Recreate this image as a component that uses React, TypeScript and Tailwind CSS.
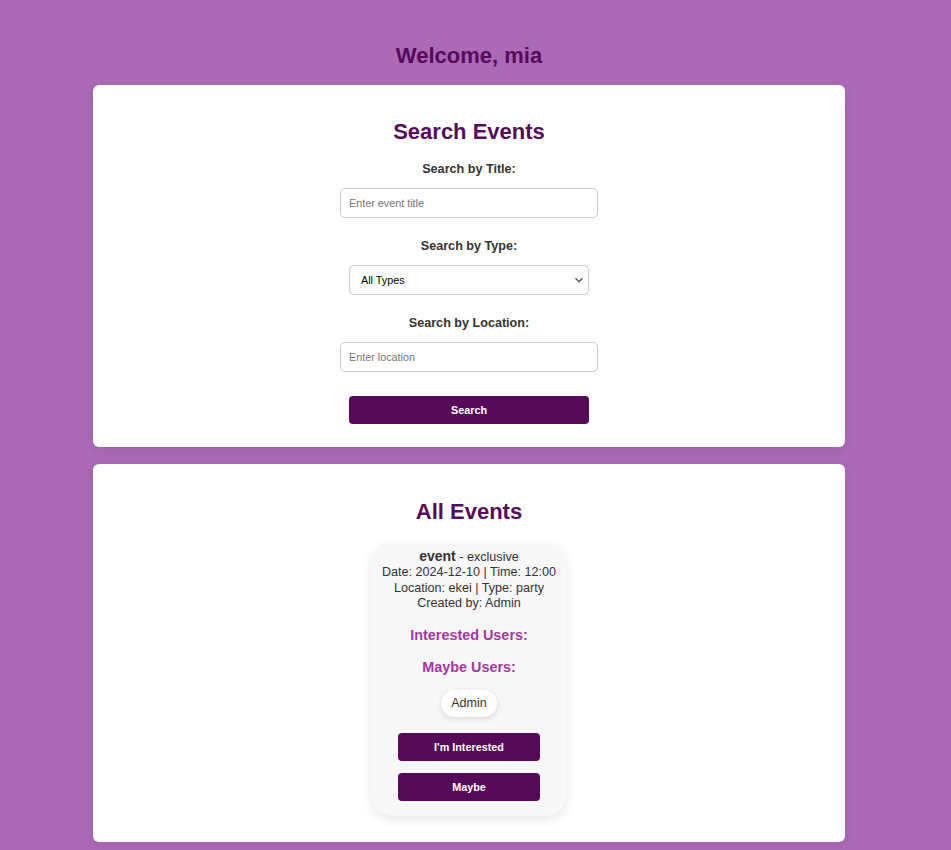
const font = { fontFamily: '"Liberation Sans", Arial, sans-serif' };

const Label = ({ children }: { children: React.ReactNode }) => {
  return <p className="text-[12.6px] leading-[16px] font-bold text-[#333333]">{children}</p>;
};

const SearchCard = () => {
  return (
    <section className="w-[752px] bg-white rounded-[6px] shadow-[0_2px_10px_rgba(0,0,0,0.08)] flex flex-col items-center pt-[33px] pb-[23px]">
      <h2 className="text-[22px] leading-[28px] font-bold text-[#560a5b]">Search Events</h2>
      <div className="mt-[15px]">
        <Label>Search by Title:</Label>
      </div>
      <input
        className="mt-[11px] w-[258px] h-[30px] border border-[#cccccc] rounded-[5px] px-[8px] text-[10.8px] text-black placeholder:text-[#757575] outline-none"
        placeholder="Enter event title"
      />
      <div className="mt-[20px]">
        <Label>Search by Type:</Label>
      </div>
      <div className="mt-[11px] relative w-[240px] h-[30px]">
        <select className="w-full h-full border border-[#cccccc] rounded-[5px] pl-[11px] pr-[24px] text-[10.8px] text-black bg-white appearance-none outline-none">
          <option>All Types</option>
        </select>
        <svg className="absolute right-[5px] top-[10px] pointer-events-none" width="10" height="10" viewBox="0 0 10 10">
          <path d="M1.5 3.2 L5 6.7 L8.5 3.2" fill="none" stroke="#555" strokeWidth="1.4" />
        </svg>
      </div>
      <div className="mt-[20px]">
        <Label>Search by Location:</Label>
      </div>
      <input
        className="mt-[11px] w-[258px] h-[30px] border border-[#cccccc] rounded-[5px] px-[8px] text-[10.8px] text-black placeholder:text-[#757575] outline-none"
        placeholder="Enter location"
      />
      <button className="mt-[24px] w-[240px] h-[28px] bg-[#560a58] rounded-[4px] text-white text-[10.8px] font-bold">
        Search
      </button>
    </section>
  );
};

const EventCard = () => {
  return (
    <div className="w-[196px] bg-[#f7f7f7] rounded-[22px] shadow-[0_4px_12px_rgba(0,0,0,0.1)] flex flex-col items-center pt-[7px] pb-[15px] text-center">
      <div className="text-[12.6px] leading-[15.4px] text-[#333333]">
        <p>
          <span className="font-bold text-[14px]">event</span> - exclusive
        </p>
        <p>Date: 2024-12-10 | Time: 12:00</p>
        <p>Location: ekei | Type: party</p>
        <p>Created by: Admin</p>
      </div>
      <p className="mt-[15px] text-[14.4px] leading-[16px] font-bold text-[#a3379f]">Interested Users:</p>
      <p className="mt-[16px] text-[14.4px] leading-[16px] font-bold text-[#a3379f]">Maybe Users:</p>
      <span className="mt-[15px] h-[27px] px-[10px] flex items-center bg-white rounded-full shadow-[0_2px_6px_rgba(0,0,0,0.12)] text-[12.6px] text-[#333333]">
        Admin
      </span>
      <button className="mt-[16px] w-[142px] h-[28px] bg-[#560a58] rounded-[4px] text-white text-[10.8px] font-bold">
        I'm Interested
      </button>
      <button className="mt-[12px] w-[142px] h-[28px] bg-[#560a58] rounded-[4px] text-white text-[10.8px] font-bold">
        Maybe
      </button>
    </div>
  );
};

const EventsCard = () => {
  return (
    <section className="w-[752px] bg-white rounded-[6px] shadow-[0_2px_10px_rgba(0,0,0,0.08)] flex flex-col items-center pt-[34px] pb-[26px]">
      <h2 className="text-[22px] leading-[28px] font-bold text-[#560a5b]">All Events</h2>
      <div className="mt-[16px]">
        <EventCard />
      </div>
    </section>
  );
};

export default function App() {
  return (
    <div className="min-h-screen bg-[#ab69b6] pl-[93px] pt-[43px] pb-[8px]" style={font}>
      <div className="w-[752px] flex flex-col items-center">
        <h1 className="text-[22px] leading-[26px] font-bold text-[#560a5b]">Welcome, mia</h1>
        <div className="mt-[16px] flex flex-col gap-[17px]">
          <SearchCard />
          <EventsCard />
        </div>
      </div>
    </div>
  );
}
